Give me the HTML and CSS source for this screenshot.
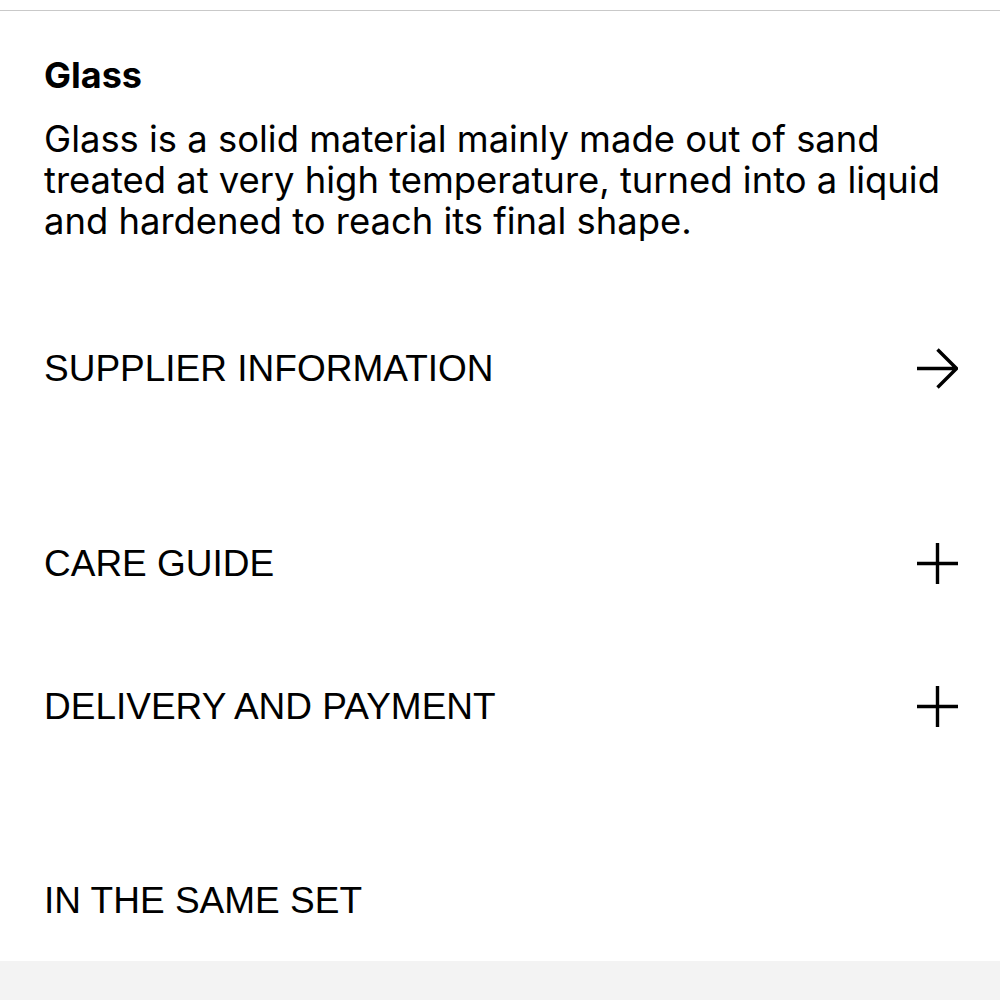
FILE: index.html
```html
<!DOCTYPE html>
<html lang="en">
<head>
<meta charset="utf-8">
<title>Glass</title>
<link rel="stylesheet" href="styles.css">
</head>
<body>
<div class="page">
  <div class="rule"></div>
  <main class="content">
    <h2 class="title">Glass</h2>
    <p class="desc">Glass is a solid material mainly made out of sand treated at very high temperature, turned into a liquid and hardened to reach its final shape.</p>

    <div class="item item-supplier">
      <span class="label">SUPPLIER INFORMATION</span>
      <svg class="icon" width="41" height="41" viewBox="0 0 41 41" aria-hidden="true">
        <path d="M0 20.5 H39 M20.5 1.5 L39.5 20.5 L20.5 39.5" fill="none" stroke="#000" stroke-width="3.4"/>
      </svg>
    </div>

    <div class="item item-care">
      <span class="label">CARE GUIDE</span>
      <svg class="icon" width="41" height="41" viewBox="0 0 41 41" aria-hidden="true">
        <path d="M0 20.5 H41 M20.5 0 V41" fill="none" stroke="#000" stroke-width="3.4"/>
      </svg>
    </div>

    <div class="item item-delivery">
      <span class="label">DELIVERY AND PAYMENT</span>
      <svg class="icon" width="41" height="41" viewBox="0 0 41 41" aria-hidden="true">
        <path d="M0 20.5 H41 M20.5 0 V41" fill="none" stroke="#000" stroke-width="3.4"/>
      </svg>
    </div>

    <div class="item item-set">
      <span class="label">IN THE SAME SET</span>
    </div>
  </main>
  <div class="footer"></div>
</div>
</body>
</html>
```

FILE: styles.css
```css
html, body {
  margin: 0;
  padding: 0;
  background: #ffffff;
}

body {
  color: #000;
  font-family: Inter, "Noto Sans", sans-serif;
}

.page {
  padding-top: 10px;
  display: flex;
  flex-direction: column;
  min-height: 990px;
}

.rule {
  border-top: 1px solid #c9c9c9;
}

.content {
  flex: 1;
  padding: 0 42px 0 44px;
}

.title {
  margin: 44px 0 0;
  font-size: 36px;
  line-height: 40px;
  font-weight: 700;
  letter-spacing: 0;
}

.desc {
  margin: 24px 0 0;
  font-size: 36.4px;
  line-height: 41px;
  font-weight: 400;
}

.item {
  display: flex;
  justify-content: space-between;
  align-items: center;
  height: 41px;
}

.label {
  font-family: "Liberation Sans", Arial, sans-serif;
  font-size: 37px;
  line-height: 41px;
}

.icon {
  display: block;
  flex: none;
}

.item-supplier { margin-top: 106px; }
.item-care { margin-top: 154px; }
.item-delivery { margin-top: 102px; }
.item-set { margin-top: 153px; }

.footer {
  height: 39px;
  background: #f3f3f3;
}
```
